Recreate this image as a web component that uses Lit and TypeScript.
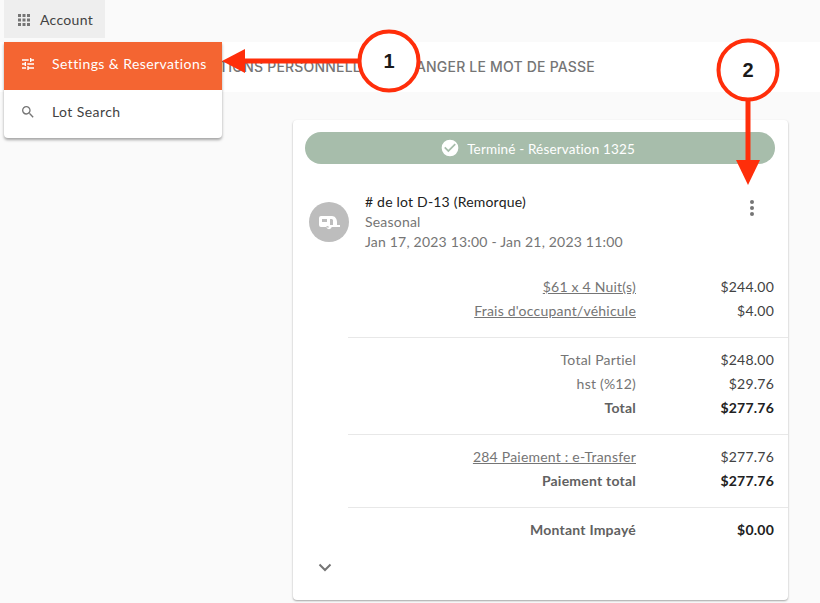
import { LitElement, html, css } from "lit";
import { customElement } from "lit/decorators.js";

const row = (label: string, value: string, cls = "") =>
  html`<div class="row ${cls}"><span class="lab">${label}</span><span class="val">${value}</span></div>`;

@customElement("app-root")
export class AppRoot extends LitElement {
  static styles = css`
    :host { display: block; width: 820px; height: 603px; position: relative; overflow: hidden; background: #fafafa; font-family: "Lato", "Open Sans", sans-serif; color: #212121; }
    .top { height: 42px; padding-left: 4px; display: flex; }
    .acct { width: 101px; height: 38px; margin-bottom: 4px; background: #eeeeee; display: flex; align-items: center; gap: 10px; padding: 1px 0 0 14px; box-sizing: border-box; font-size: 14px; letter-spacing: .3px; color: #424242; }
    .tabs { height: 50px; background: #fff; display: flex; align-items: center; justify-content: flex-end; padding: 0 225px 1px 0; box-sizing: border-box; gap: 16px; font-family: "Inter", sans-serif; font-weight: 500; font-size: 14px; letter-spacing: .2px; color: #757575; white-space: nowrap; }
    .content { padding: 28px 32px 0 293px; }
    .card { width: 495px; height: 480px; box-sizing: border-box; background: #fff; border-radius: 4px; box-shadow: 0 1px 2px rgba(0,0,0,.35); padding: 12px 13px 0 12px; display: flex; flex-direction: column; }
    .pill { height: 32px; background: #a7bdab; border-radius: 16px; color: #fff; display: flex; align-items: center; justify-content: center; gap: 7px; padding-right: 5px; font-size: 13.5px; letter-spacing: .15px; }
    .pill span { padding-top: 1px; }
    .head { display: flex; margin-top: 27px; padding-left: 4px; }
    .avatar { width: 40px; height: 40px; border-radius: 50%; background: #bdbdbd; margin: 11px 16px 0 0; display: flex; align-items: center; justify-content: center; }
    .info { flex: 1; font-size: 14px; line-height: 20px; color: #757575; letter-spacing: .2px; padding-top: 1px; }
    .info .title { color: #212121; }
    .dots { margin: 9px 21px 0 0; }
    .table { margin: 13px -13px 0 43px; }
    .sec { border-bottom: 1px solid #e8e8e8; padding: 10px 14px 14px 0; display: flex; flex-direction: column; }
    .sec.last { border: 0; }
    .row { display: flex; justify-content: flex-end; height: 24px; box-sizing: border-box; padding-bottom: 2px; align-items: center; font-size: 14px; letter-spacing: .22px; color: #757575; }
    .val { width: 138px; text-align: right; color: #424242; }
    .u .lab { text-decoration: underline; }
    .b .lab { font-weight: 700; color: #616161; }
    .b .val { font-weight: 700; color: #212121; }
    .chev { margin: 7px 0 0 13px; display: block; }
    .menu { position: absolute; left: 4px; top: 42px; width: 218px; background: #fff; border-radius: 0 0 4px 4px; box-shadow: 0 2px 3px rgba(0,0,0,.35); font-size: 14px; letter-spacing: .42px; }
    .item { height: 48px; box-sizing: border-box; padding: 0 0 5px 16px; display: flex; align-items: center; gap: 16px; color: #424242; }
    .item.on { background: #f46532; color: #fff; }
    .ann { position: absolute; inset: 0; pointer-events: none; }
    .ann text { font-family: "Liberation Sans", sans-serif; font-weight: 700; font-size: 20px; fill: #1a1a1a; }
  `;

  render() {
    return html`
      <div class="top">
        <div class="acct">
          <svg width="12" height="12" viewBox="0 0 12 12" fill="#757575"><path d="M0 0h3v3H0zM4.5 0h3v3h-3zM9 0h3v3H9zM0 4.5h3v3H0zM4.5 4.5h3v3h-3zM9 4.5h3v3H9zM0 9h3v3H0zM4.5 9h3v3h-3zM9 9h3v3H9z"/></svg>
          Account
        </div>
      </div>
      <div class="tabs"><span>ATIONS PERSONNELLES</span><span>CHANGER LE MOT DE PASSE</span></div>
      <div class="content">
        <div class="card">
          <div class="pill">
            <svg width="20" height="20" viewBox="0 0 24 24" fill="#fff"><path d="M12 2a10 10 0 1 0 0 20 10 10 0 0 0 0-20zm-2 15-5-5 1.41-1.41L10 14.17l7.59-7.59L19 8l-9 9z"/></svg>
            <span>Terminé - Réservation 1325</span>
          </div>
          <div class="head">
            <div class="avatar">
              <svg width="24" height="24" viewBox="0 0 24 24" fill="#fff"><path fill-rule="evenodd" d="M4 6h11c3 0 5 3 5 6v3h3v2h-8.2a2.9 2.9 0 0 1-5.6 0H4a2 2 0 0 1-2-2V8a2 2 0 0 1 2-2zm1 3v3h5V9H5zm8 0v6h3v-5l-1-1h-2zM12 17.5a1.5 1.5 0 1 0-3 0h3z"/></svg>
            </div>
            <div class="info">
              <div class="title"># de lot D-13 (Remorque)</div>
              <div>Seasonal</div>
              <div>Jan 17, 2023 13:00 - Jan 21, 2023 11:00</div>
            </div>
            <svg class="dots" width="4" height="16" viewBox="0 0 4 16" fill="#757575"><circle cx="2" cy="2" r="2"/><circle cx="2" cy="8" r="2"/><circle cx="2" cy="14" r="2"/></svg>
          </div>
          <div class="table">
            <div class="sec">
              ${row("$61 x 4 Nuit(s)", "$244.00", "u")}
              ${row("Frais d'occupant/véhicule", "$4.00", "u")}
            </div>
            <div class="sec">
              ${row("Total Partiel", "$248.00")}
              ${row("hst (%12)", "$29.76")}
              ${row("Total", "$277.76", "b")}
            </div>
            <div class="sec">
              ${row("284 Paiement : e-Transfer", "$277.76", "u")}
              ${row("Paiement total", "$277.76", "b")}
            </div>
            <div class="sec last">
              ${row("Montant Impayé", "$0.00", "b")}
            </div>
          </div>
          <svg class="chev" width="14" height="9" viewBox="0 0 14 9" fill="none" stroke="#757575" stroke-width="2"><path d="M1.5 1.5 7 7l5.5-5.5"/></svg>
        </div>
      </div>
      <div class="menu">
        <div class="item on">
          <svg width="16" height="16" viewBox="0 0 24 24" fill="#fff"><path d="M3 17v2h6v-2H3zM3 5v2h10V5H3zm10 16v-2h8v-2h-8v-2h-2v6h2zM7 9v2H3v2h4v2h2V9H7zm14 4v-2H11v2h10zm-6-4h2V7h4V5h-4V3h-2v6z"/></svg>
          Settings &amp; Reservations
        </div>
        <div class="item">
          <svg width="16" height="16" viewBox="0 0 24 24" fill="#757575"><path d="M15.5 14h-.79l-.28-.27A6.47 6.47 0 0 0 16 9.5 6.5 6.5 0 1 0 9.5 16c1.61 0 3.09-.59 4.23-1.57l.27.28v.79l5 4.99L20.49 19l-4.99-5zm-6 0C7.01 14 5 11.99 5 9.5S7.01 5 9.5 5 14 7.01 14 9.5 11.99 14 9.5 14z"/></svg>
          Lot Search
        </div>
      </div>
      <svg class="ann" width="820" height="603" viewBox="0 0 820 603">
        <path d="M360 61H244" stroke="#ff2e0a" stroke-width="5"/>
        <path d="M222 61 245 49V73Z" fill="#ff2e0a"/>
        <circle cx="389" cy="61" r="29.5" fill="#fff" stroke="#ff2e0a" stroke-width="4"/>
        <text x="389" y="68" text-anchor="middle">1</text>
        <path d="M748 100V162" stroke="#ff2e0a" stroke-width="5"/>
        <path d="M748 185 736 160H760Z" fill="#ff2e0a"/>
        <circle cx="748" cy="70" r="29.5" fill="#fff" stroke="#ff2e0a" stroke-width="4"/>
        <text x="748" y="77" text-anchor="middle">2</text>
      </svg>
    `;
  }
}
